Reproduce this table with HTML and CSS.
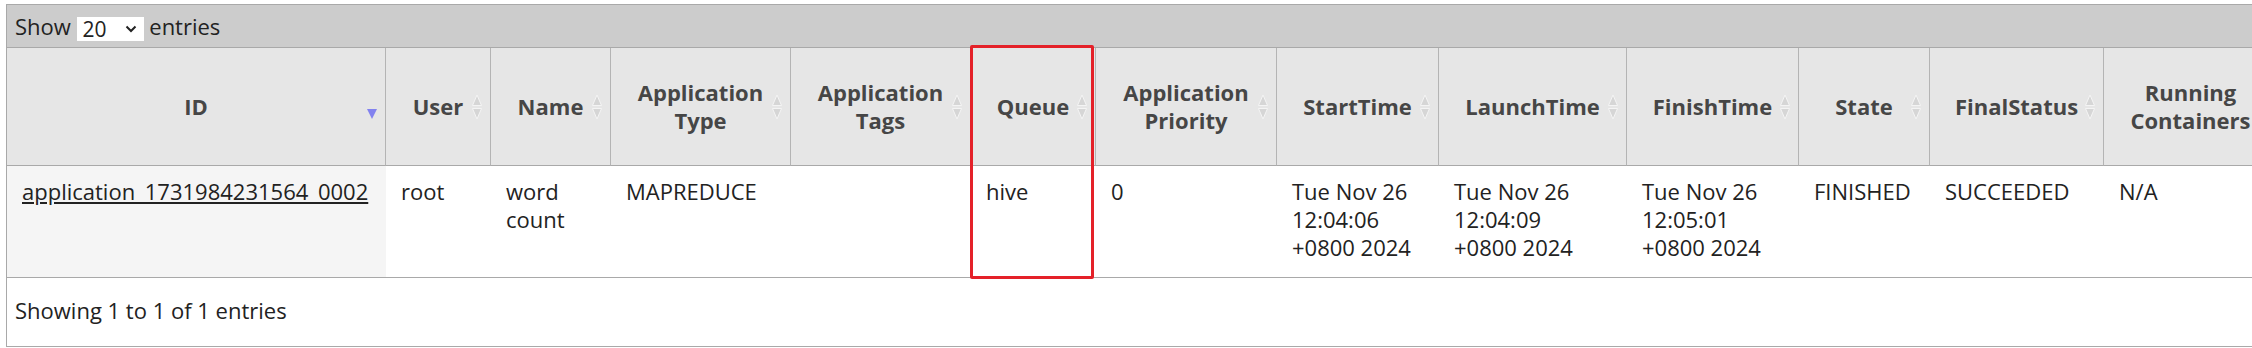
FILE: index.html
```html
<!DOCTYPE html>
<html lang="en">
<head>
<meta charset="utf-8">
<title>Applications</title>
<link rel="stylesheet" href="styles.css">
</head>
<body>
<div class="wrap">
  <div class="toolbar">Show <span class="select"><span class="select-val">20</span><svg class="chev" width="12" height="8" viewBox="0 0 12 8"><path d="M1.5 1.5 L6 6 L10.5 1.5" fill="none" stroke="#222" stroke-width="2"/></svg></span> entries</div>
  <table class="apps">
    <colgroup>
      <col class="c-id"><col class="c-user"><col class="c-name"><col class="c-type"><col class="c-tags"><col class="c-queue"><col class="c-prio"><col class="c-start"><col class="c-launch"><col class="c-finish"><col class="c-state"><col class="c-final"><col class="c-run">
    </colgroup>
    <thead>
      <tr>
        <th>ID<svg class="sort" width="10" height="26" viewBox="0 0 10 26"><path d="M0 15 H10 L5 25 Z" fill="#8282ef"/></svg></th>
        <th>User<svg class="sort" width="10" height="26" viewBox="0 0 10 26"><path d="M5 1 L9.5 11.5 H0.5 Z M0.5 14.5 H9.5 L5 25 Z" fill="#d6d6d6" stroke="#f4f4f4" stroke-width="1"/></svg></th>
        <th>Name<svg class="sort" width="10" height="26" viewBox="0 0 10 26"><path d="M5 1 L9.5 11.5 H0.5 Z M0.5 14.5 H9.5 L5 25 Z" fill="#d6d6d6" stroke="#f4f4f4" stroke-width="1"/></svg></th>
        <th>Application Type<svg class="sort" width="10" height="26" viewBox="0 0 10 26"><path d="M5 1 L9.5 11.5 H0.5 Z M0.5 14.5 H9.5 L5 25 Z" fill="#d6d6d6" stroke="#f4f4f4" stroke-width="1"/></svg></th>
        <th>Application Tags<svg class="sort" width="10" height="26" viewBox="0 0 10 26"><path d="M5 1 L9.5 11.5 H0.5 Z M0.5 14.5 H9.5 L5 25 Z" fill="#d6d6d6" stroke="#f4f4f4" stroke-width="1"/></svg></th>
        <th>Queue<svg class="sort" width="10" height="26" viewBox="0 0 10 26"><path d="M5 1 L9.5 11.5 H0.5 Z M0.5 14.5 H9.5 L5 25 Z" fill="#d6d6d6" stroke="#f4f4f4" stroke-width="1"/></svg></th>
        <th>Application Priority<svg class="sort" width="10" height="26" viewBox="0 0 10 26"><path d="M5 1 L9.5 11.5 H0.5 Z M0.5 14.5 H9.5 L5 25 Z" fill="#d6d6d6" stroke="#f4f4f4" stroke-width="1"/></svg></th>
        <th>StartTime<svg class="sort" width="10" height="26" viewBox="0 0 10 26"><path d="M5 1 L9.5 11.5 H0.5 Z M0.5 14.5 H9.5 L5 25 Z" fill="#d6d6d6" stroke="#f4f4f4" stroke-width="1"/></svg></th>
        <th>LaunchTime<svg class="sort" width="10" height="26" viewBox="0 0 10 26"><path d="M5 1 L9.5 11.5 H0.5 Z M0.5 14.5 H9.5 L5 25 Z" fill="#d6d6d6" stroke="#f4f4f4" stroke-width="1"/></svg></th>
        <th>FinishTime<svg class="sort" width="10" height="26" viewBox="0 0 10 26"><path d="M5 1 L9.5 11.5 H0.5 Z M0.5 14.5 H9.5 L5 25 Z" fill="#d6d6d6" stroke="#f4f4f4" stroke-width="1"/></svg></th>
        <th>State<svg class="sort" width="10" height="26" viewBox="0 0 10 26"><path d="M5 1 L9.5 11.5 H0.5 Z M0.5 14.5 H9.5 L5 25 Z" fill="#d6d6d6" stroke="#f4f4f4" stroke-width="1"/></svg></th>
        <th>FinalStatus<svg class="sort" width="10" height="26" viewBox="0 0 10 26"><path d="M5 1 L9.5 11.5 H0.5 Z M0.5 14.5 H9.5 L5 25 Z" fill="#d6d6d6" stroke="#f4f4f4" stroke-width="1"/></svg></th>
        <th>Running Containers<svg class="sort" width="10" height="26" viewBox="0 0 10 26"><path d="M5 1 L9.5 11.5 H0.5 Z M0.5 14.5 H9.5 L5 25 Z" fill="#d6d6d6" stroke="#f4f4f4" stroke-width="1"/></svg></th>
      </tr>
    </thead>
    <tbody>
      <tr>
        <td class="sorted"><a href="#">application_1731984231564_0002</a></td>
        <td>root</td>
        <td>word count</td>
        <td>MAPREDUCE</td>
        <td></td>
        <td>hive</td>
        <td>0</td>
        <td>Tue Nov 26 12:04:06 +0800 2024</td>
        <td>Tue Nov 26 12:04:09 +0800 2024</td>
        <td>Tue Nov 26 12:05:01 +0800 2024</td>
        <td>FINISHED</td>
        <td>SUCCEEDED</td>
        <td>N/A</td>
      </tr>
    </tbody>
  </table>
  <div class="info">Showing 1 to 1 of 1 entries</div>
  <div class="highlight"></div>
</div>
</body>
</html>
```

FILE: styles.css
```css
html, body {
  margin: 0;
  padding: 0;
  overflow: hidden;
  background: #fff;
}

body {
  font-family: "Open Sans", "Noto Sans", "Liberation Sans", sans-serif;
  font-size: 22px;
  line-height: 28px;
  color: #222;
}

.wrap {
  position: relative;
  width: max-content;
  margin: 4px 0 0 6px;
  border-top: 1px solid #a9a9a9;
  border-left: 1px solid #a9a9a9;
  border-bottom: 1px solid #a9a9a9;
}

.toolbar {
  background: #cccccc;
  padding: 7px 0 6px 8px;
  border-bottom: 1px solid #a9a9a9;
  color: #222;
}

.select {
  display: inline-flex;
  align-items: center;
  justify-content: space-between;
  vertical-align: middle;
  box-sizing: border-box;
  width: 67px;
  height: 24px;
  padding: 0 7px 0 6px;
  background: #fff;
  line-height: 24px;
  font-size: 21px;
}

.chev {
  display: block;
}

.apps {
  table-layout: fixed;
  width: 2271px;
  border-collapse: separate;
  border-spacing: 0;
}

.c-id { width: 379px; }
.c-user { width: 105px; }
.c-name { width: 120px; }
.c-type { width: 180px; }
.c-tags { width: 180px; }
.c-queue { width: 125px; }
.c-prio { width: 181px; }
.c-start { width: 162px; }
.c-launch { width: 188px; }
.c-finish { width: 172px; }
.c-state { width: 131px; }
.c-final { width: 174px; }
.c-run { width: 174px; }

.apps th {
  position: relative;
  background: #e6e6e6;
  color: #464646;
  font-weight: 700;
  text-align: center;
  vertical-align: middle;
  padding: 30px 15px 31px;
  border-right: 1px solid #b4b4b4;
  border-bottom: 1px solid #a9a9a9;
}

.sort {
  position: absolute;
  right: 8px;
  top: 50%;
  transform: translateY(-50%);
}

.apps td {
  vertical-align: top;
  padding: 11px 22px 16px 15px;
  border-bottom: 1px solid #a9a9a9;
  color: #222;
  background: #fff;
}

.apps td.sorted {
  background: #f5f5f5;
}

.apps a {
  color: #222;
  text-decoration: underline;
}

.info {
  padding: 18px 0 22px 8px;
  color: #222;
}

.highlight {
  position: absolute;
  left: 963px;
  top: 40px;
  width: 118px;
  height: 228px;
  border: 3px solid #e42129;
  border-radius: 2px;
}
```
